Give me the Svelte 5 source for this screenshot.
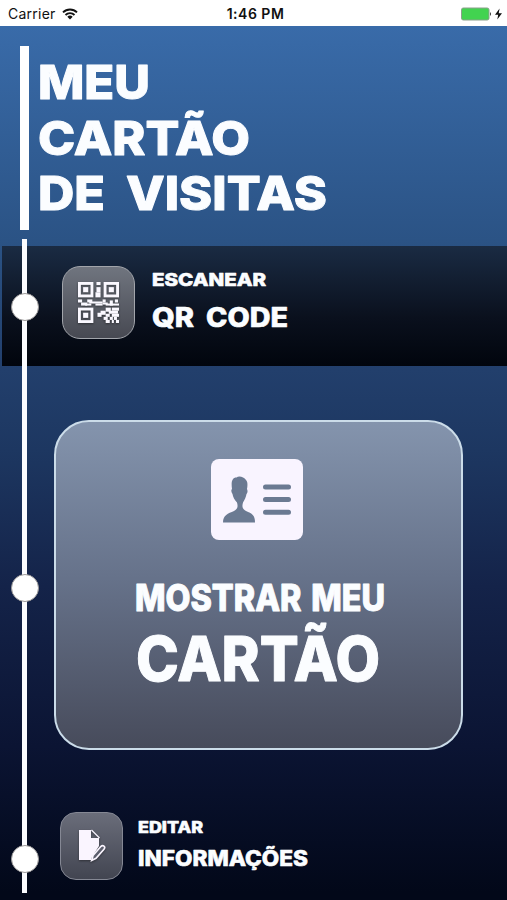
<script>
  const title = [
    [{ text: "MEU", x: 0, w: 112 }],
    [{ text: "CARTÃO", x: 0, w: 212 }],
    [
      { text: "DE", x: 0, w: 67 },
      { text: "VISITAS", x: 88, w: 201 },
    ],
  ];

  // filled cells of the qr icon: x, y, width, height
  const cells = [
    [18, 0, 4, 3], [18, 5, 4, 5], [17, 10, 5, 5],
    [0, 17, 4, 3], [9, 17, 5, 3], [24, 17, 3, 3], [36, 17, 3, 3],
    [3, 20, 6, 3], [11, 19, 13, 2], [24, 20, 5, 2], [31, 18, 3, 5],
    [7, 21, 6, 2], [17, 21, 7, 2], [27, 21, 13, 2],
    [27, 25, 5, 4], [33, 25, 7, 3], [22, 28, 5, 4], [30, 28, 9, 3],
    [19, 30, 4, 4], [27, 31, 4, 3], [33, 31, 7, 3],
    [25, 34, 4, 3], [31, 34, 3, 3], [35, 34, 3, 3],
    [27, 37, 4, 3], [33, 37, 2, 3], [37, 37, 3, 3],
  ];
</script>

{#snippet line(words, size, height)}
  <svg class="line" width="260" {height} font-size={size}>
    {#each words as word}
      <text x={word.x} y={height} textLength={word.w} lengthAdjust="spacingAndGlyphs">{word.text}</text>
    {/each}
  </svg>
{/snippet}

<div class="status">
  <div class="carrier">
    <span>Carrier</span>
    <svg width="16" height="12" viewBox="0 0 16 12">
      <g fill="none" stroke="#111" stroke-width="1.9">
        <path d="M1 4.4A10 10 0 0 1 15 4.4" />
        <path d="M3.5 7A6.3 6.3 0 0 1 12.5 7" />
      </g>
      <path d="M5.3 8.8A4 4 0 0 1 10.7 8.8L8 11.6Z" fill="#111" />
    </svg>
  </div>
  <span class="time">1:46 PM</span>
  <svg class="battery" width="42" height="14" viewBox="0 0 42 14">
    <rect x=".5" y="1" width="27.5" height="12" rx="1.8" fill="#42d350" stroke="#8aa08b" />
    <path d="M29 5q2 2 0 4Z" fill="#333" />
    <path d="M38.6 1.5L34 7.8h3.2L36.3 12.5L41 6.2H37.7Z" fill="#111" />
  </svg>
</div>

<main>
  <header>
    <h1>
      {#each title as words}
        {@render line(words, 47, 34)}
      {/each}
    </h1>
  </header>

  <div class="rail">
    <i></i>
    <i></i>
    <i></i>
  </div>

  <section class="scan">
    <div class="tile">
      <svg width="41" height="41" viewBox="0 0 40 40">
        {#each [[0, 0], [25, 0], [0, 25]] as [x, y]}
          <rect x={x + 1.4} y={y + 1.4} width="12.2" height="12.2" fill="none" stroke="#faf8ff" stroke-width="2.8" />
          <rect x={x + 5} y={y + 5} width="5" height="5" fill="#faf8ff" />
        {/each}
        {#each cells as [x, y, w, h]}
          <rect {x} {y} width={w} height={h} fill="#faf8ff" />
        {/each}
      </svg>
    </div>
    <div class="label">
      {@render line([{ text: "ESCANEAR", x: 0, w: 114 }], 17.5, 13)}
      {@render line([{ text: "QR", x: 0, w: 42 }, { text: "CODE", x: 54, w: 82 }], 26.5, 19.5)}
    </div>
  </section>

  <section class="card">
    <svg class="badge" width="92" height="81" viewBox="0 0 92 81">
      <rect width="92" height="81" rx="8" fill="#f9f4ff" />
      <path
        d="M12 63.500C12 56 17 54.500 23 52C27 50 27 47 26 43.500C23.500 41 22 38 21.500 35C20 33 20 31 21 30C20 23 21 18.500 25.500 18.500C28 16.500 33 18 35 21C37 23 36.500 27 36 30C37 32 36.500 34 35.500 35C35 38 33.500 41 32 43.500C31 47 31 50 35 52C41 54.500 44 56 44 63.500Z"
        fill="#6b7a92"
      />
      <path d="M54.500 28H77.500M54.500 40.500H77.500M54.500 53.300H77.500" stroke="#6b7a92" stroke-width="5" stroke-linecap="round" />
    </svg>
    <div class="label">
      {@render line([{ text: "MOSTRAR MEU", x: 0, w: 250 }], 36.5, 27)}
      {@render line([{ text: "CARTÃO", x: 1, w: 244 }], 62, 45)}
    </div>
  </section>

  <section class="edit">
    <div class="tile">
      <svg width="28" height="34" viewBox="0 0 28 34">
        <path d="M1 1H13V9H21V17L14 28L13 31H1Z" fill="#faf5ff" />
        <path d="M13.500 1L21.500 9" stroke="#faf5ff" stroke-width="1.3" />
        <path d="M15 26.500L23 17.300Q24.500 15.800 26 17.200Q27.500 18.500 26 20.200L18 29.300L13.700 31.500Z" fill="#5c5f6d" stroke="#faf5ff" stroke-width="1.700" />
      </svg>
    </div>
    <div class="label">
      {@render line([{ text: "EDITAR", x: 0, w: 65 }], 15.5, 12)}
      {@render line([{ text: "INFORMAÇÕES", x: 0, w: 170 }], 21, 15.5)}
    </div>
  </section>
</main>

<style>
  :global(body) {
    background: #020819;
    overflow: hidden;
  }

  .status {
    height: 26px;
    box-sizing: border-box;
    padding: 1px 4px 0 8px;
    display: grid;
    grid-template-columns: 1fr auto 1fr;
    align-items: center;
    background: #fff;
    color: #111;
    font-family: "Inter", sans-serif;
    font-size: 14px;
  }

  .carrier {
    display: flex;
    align-items: center;
    gap: 6px;
    letter-spacing: 0.25px;
  }

  .time {
    font-weight: 600;
    letter-spacing: 0.5px;
  }

  .battery {
    justify-self: end;
  }

  main {
    position: relative;
    height: 874px;
    box-sizing: border-box;
    padding-top: 20px;
    background: linear-gradient(#396ba9 0, #2b5385 214px, #223f6c 344px, #1d3761 424px, #142349 560px, #0b1433 720px, #020819 866px);
  }

  header {
    height: 184px;
    box-sizing: border-box;
    margin-left: 20px;
    border-left: 9px solid #fff;
    padding: 19px 0 0 9px;
  }

  h1 {
    margin: 0;
    display: flex;
    flex-direction: column;
    gap: 21.500px;
  }

  .line {
    display: block;
    overflow: visible;
    fill: #fbfdff;
    stroke: #fbfdff;
    stroke-width: 0.6px;
    stroke-linejoin: round;
    font-family: "Inter", sans-serif;
    font-weight: 800;
    word-spacing: 3px;
  }

  h1 .line,
  .card .line {
    stroke-width: 1px;
  }

  .rail {
    position: absolute;
    left: 21.500px;
    top: 213px;
    width: 5px;
    height: 654px;
    background: #fbfcff;
  }

  .rail i {
    position: absolute;
    left: -11px;
    top: 54px;
    width: 26px;
    height: 26px;
    border: 1px solid #9b9999;
    border-radius: 50%;
    background: #fff;
  }

  .rail i:nth-child(2) {
    top: 335px;
  }

  .rail i:nth-child(3) {
    top: 606px;
  }

  section {
    display: flex;
    box-sizing: border-box;
  }

  .scan {
    height: 120px;
    margin: 16px 0 0 2px;
    padding: 20px 0 0 60px;
    gap: 17px;
    background: linear-gradient(#1a2b43, #0a101d 60%, #01050d);
  }

  .tile {
    width: 73px;
    height: 73px;
    box-sizing: border-box;
    display: flex;
    align-items: center;
    justify-content: center;
    border: 1px solid #a2a5ab;
    border-radius: 18px;
    background: linear-gradient(#70757f, #474952);
  }

  .tile svg {
    filter: drop-shadow(0 1px 1px #0006);
  }

  .scan .label {
    display: flex;
    flex-direction: column;
    padding-top: 7px;
    gap: 21px;
  }

  .card {
    width: 409px;
    height: 330px;
    margin: 54px 0 0 54px;
    padding: 37px 0 0;
    flex-direction: column;
    align-items: center;
    border: 2px solid #cbdce9;
    border-radius: 35px;
    background: linear-gradient(#8494ad, #66728a 48%, #474b5b);
  }

  .badge {
    margin-right: 3px;
  }

  .card .label {
    width: 248px;
    display: flex;
    flex-direction: column;
    padding-top: 44px;
    gap: 25px;
  }

  .edit {
    margin: 62px 0 0 60px;
    gap: 14.500px;
  }

  .edit .tile {
    width: 63px;
    height: 68px;
    border-radius: 16px;
    border-color: #858894;
    background: linear-gradient(#6a6d7a, #424551);
  }

  .edit .label {
    display: flex;
    flex-direction: column;
    padding-top: 9px;
    gap: 17px;
  }
</style>
